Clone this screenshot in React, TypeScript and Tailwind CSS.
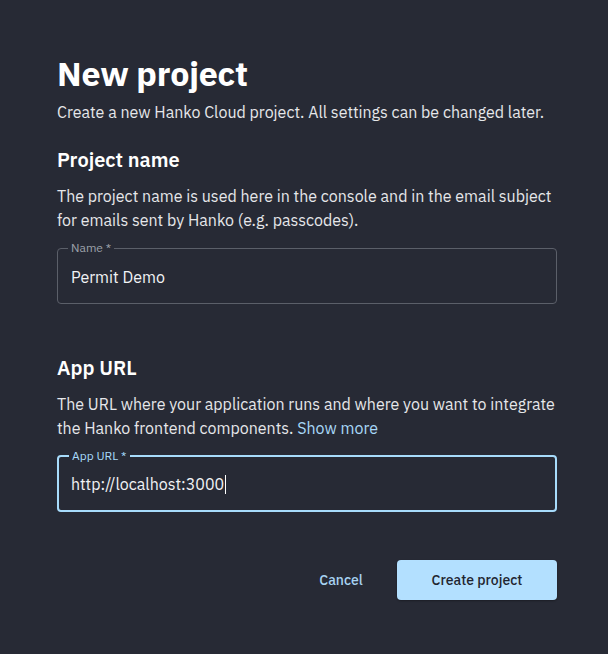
import React from "react";

const font = { fontFamily: '"IBM Plex Sans", "Noto Sans", "Open Sans", sans-serif' };

function Field({ label, value, focused }: { label: string; value: string; focused?: boolean }) {
  return (
    <fieldset
      className={`relative h-[62px] rounded-[4px] px-[13px] ${
        focused ? "border-2 border-[#a7dbfb]" : "border border-[#5b5f69]"
      }`}
    >
      <legend
        className={`-ml-[3px] px-[3px] text-[12px] leading-[12px] ${
          focused ? "text-[#a7dbfb]" : "text-[#9ea2ab]"
        }`}
      >
        {label}
      </legend>
      <div className={`flex items-center text-[16px] text-[#f2f3f5] ${focused ? "mt-[10px] -ml-[1px]" : "mt-[11px]"}`}>
        {value}
        {focused && <span className="ml-[1px] inline-block h-[19px] w-[1px] bg-white" />}
      </div>
    </fieldset>
  );
}

export default function App() {
  return (
    <div className="min-h-[654px] w-[608px] bg-[#272a35] text-white" style={font}>
      <div className="pl-[57px] pr-[51px] pt-[50px]">
        <h1 className="text-[34px] font-bold leading-[46px] tracking-[-0.2px]">New project</h1>
        <p className="mt-[4px] text-[16px] leading-[24px] text-[#e6e7ea]">
          Create a new Hanko Cloud project. All settings can be changed later.
        </p>

        <h2 className="mt-[22px] text-[20px] font-semibold leading-[28px]">Project name</h2>
        <p className="mt-[10px] text-[16px] leading-[24px] text-[#e6e7ea]">
          The project name is used here in the console and in the email subject for emails sent by Hanko (e.g. passcodes).
        </p>
        <div className="mt-[10px]">
          <Field label="Name *" value="Permit Demo" />
        </div>

        <h2 className="mt-[50px] text-[20px] font-semibold leading-[28px]">App URL</h2>
        <p className="mt-[10px] text-[16px] leading-[24px] text-[#e6e7ea]">
          The URL where your application runs and where you want to integrate the Hanko frontend components.{" "}
          <span className="text-[#a7d8f8]">Show more</span>
        </p>
        <div className="mt-[10px]">
          <Field label="App URL *" value="http://localhost:3000" focused />
        </div>

        <div className="mt-[48px] flex items-center justify-end gap-[16px]">
          <button className="h-[40px] w-[80px] text-[14px] font-medium text-[#a7d3f2]">Cancel</button>
          <button className="h-[40px] w-[160px] rounded-[4px] bg-[#b3e0ff] text-[14px] font-medium text-[#1f2530] shadow-[0_1px_2px_rgba(0,0,0,0.3)]">
            Create project
          </button>
        </div>
      </div>
    </div>
  );
}
